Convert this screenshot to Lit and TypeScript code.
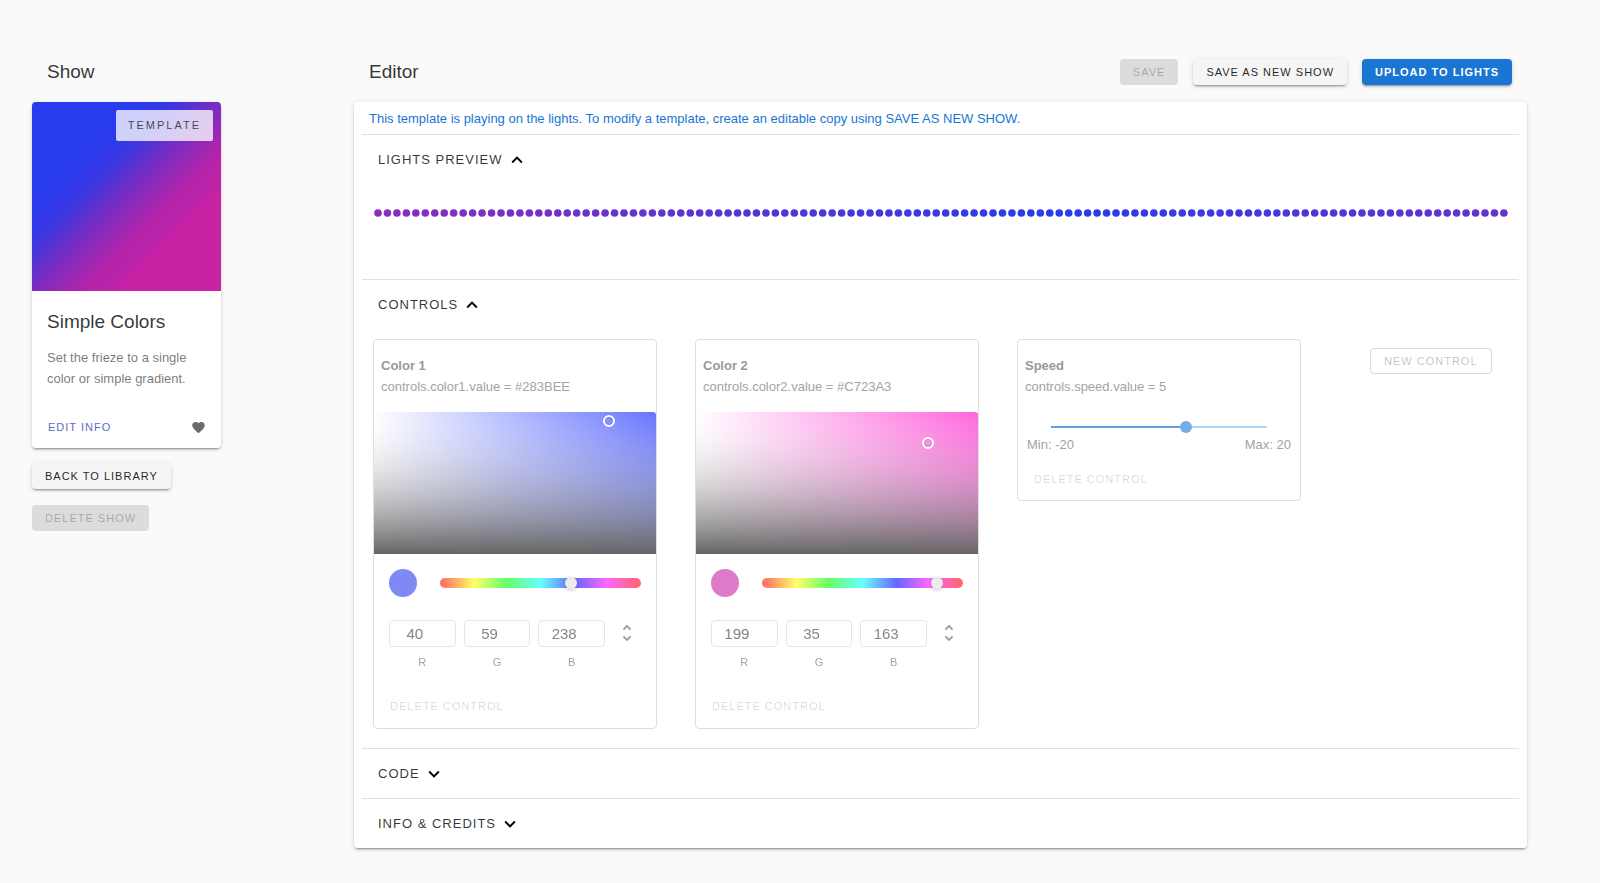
import { LitElement, html, css, svg } from "lit";
import { customElement, property, state } from "lit/decorators.js";
import { styleMap } from "lit/directives/style-map.js";

const CHEVRON_DOWN = "M7.41 8.58 12 13.17l4.59-4.59L18 10l-6 6-6-6z";
const CHEVRON_UP = "M7.41 15.41 12 10.83l4.59 4.58L18 14l-6-6-6 6z";
const HEART =
  "M12 21.35l-1.45-1.32C5.4 15.36 2 12.27 2 8.5 2 5.41 4.42 3 7.5 3c1.74 0 3.41.81 4.5 2.08C13.09 3.81 14.76 3 16.5 3 19.58 3 22 5.41 22 8.5c0 3.77-3.4 6.86-8.55 11.53z";
const UNFOLD =
  "M12 18.17 8.83 15l-1.41 1.41L12 21l4.59-4.59L15.17 15M12 5.83 15.17 9l1.41-1.41L12 3 7.41 7.59 8.83 9z";

const icon = (d: string) =>
  html`<svg class="icon" viewBox="0 0 24 24" aria-hidden="true">${svg`<path d=${d}></path>`}</svg>`;

const base = css`
  * { box-sizing: border-box; }
  h1, h2, h3, p { margin: 0; font-weight: 400; }
  .icon { display: block; fill: currentColor; }
  button {
    font-family: inherit;
    font-size: 11px;
    line-height: 16px;
    letter-spacing: 1px;
    text-transform: uppercase;
    white-space: nowrap;
    border: 0;
    border-radius: 4px;
    margin: 0;
    padding: 0 13px;
    height: 26px;
    color: rgba(0, 0, 0, 0.87);
    background: none;
  }
  .raised {
    background: #f5f5f5;
    box-shadow: 0 3px 1px -2px rgba(0, 0, 0, 0.2), 0 2px 2px 0 rgba(0, 0, 0, 0.14), 0 1px 5px 0 rgba(0, 0, 0, 0.12);
  }
  .filled:disabled { background: #dcdcdc; color: rgba(0, 0, 0, 0.26); }
  .primary { background: #1976d2; color: #fff; font-weight: 700; }
`;

const controlStyles = css`
  :host {
    display: block;
    width: 284px;
    border: 1px solid #dedede;
    border-radius: 4px;
    background: #fff;
  }
  .head { padding: 15px 7px 0; font-size: 13px; line-height: 21px; color: #a3a3a3; }
  .name { font-size: 13px; font-weight: 700; color: #999; }
  .delete { color: rgba(0, 0, 0, 0.16); padding: 0 8px; }
  input { font-family: inherit; margin: 0; }
`;

@customElement("color-control")
class ColorControl extends LitElement {
  static styles = [
    base,
    controlStyles,
    css`
      .picker { opacity: 0.6; margin-top: 15px; }
      .canvas { position: relative; height: 142px; border-top-right-radius: 3px; }
      .cursor {
        position: absolute;
        width: 12px;
        height: 12px;
        margin: -6px;
        border-radius: 50%;
        border: 2px solid #fff;
        box-shadow: inset 0 0 1px 1px rgba(0, 0, 0, 0.3), 0 0 1px rgba(0, 0, 0, 0.4);
      }
      .hue-row { display: flex; align-items: center; gap: 23px; padding: 15px 15px 0; }
      .swatch { width: 28px; height: 28px; border-radius: 50%; flex: none; }
      .spectrum {
        flex: 1;
        min-width: 0;
        height: 10px;
        border-radius: 5px;
        background: linear-gradient(90deg, red, #ff0 17%, #0f0 33%, #0ff 50%, #00f 67%, #f0f 83%, red);
      }
      .hue {
        -webkit-appearance: none;
        appearance: none;
        display: block;
        width: calc(100% + 12px);
        height: 10px;
        margin: 0 -6px;
        background: transparent;
      }
      .hue::-webkit-slider-thumb {
        -webkit-appearance: none;
        width: 12px;
        height: 12px;
        border-radius: 50%;
        background: #e0e0e0;
        box-shadow: 0 1px 4px rgba(0, 0, 0, 0.4);
      }
      .fields { display: flex; gap: 8px; padding: 23px 15px 0; }
      .field { flex: 1; min-width: 0; display: flex; flex-direction: column; gap: 7px; text-align: center; }
      .field input {
        width: 100%;
        height: 27px;
        border: 1px solid #d4d4d4;
        border-radius: 4px;
        padding: 0 4px;
        font-size: 15px;
        text-align: center;
        color: #333;
        background: #fff;
      }
      .field label { font-size: 11px; line-height: 16px; color: #666; }
      .mode { width: 28px; height: 26px; padding: 0 3px; display: grid; place-items: center; color: #555; }
      .mode .icon { width: 22px; height: 22px; }
      .foot { padding: 23px 8px 9px; }
    `,
  ];

  @property() name = "";
  @property() key = "";
  @property({ attribute: false }) rgb: number[] = [0, 0, 0];

  private get hex() {
    return "#" + this.rgb.map((c) => c.toString(16).padStart(2, "0")).join("").toUpperCase();
  }

  private get hsv() {
    const [r, g, b] = this.rgb.map((c) => c / 255);
    const max = Math.max(r, g, b);
    const d = max - Math.min(r, g, b);
    let h = 0;
    if (d) {
      if (max === r) h = ((g - b) / d + 6) % 6;
      else if (max === g) h = (b - r) / d + 2;
      else h = (r - g) / d + 4;
    }
    return { h: h * 60, s: max ? d / max : 0, v: max };
  }

  render() {
    const { h, s, v } = this.hsv;
    // The value layer fades from clear white to solid black.
    const shade = Array.from({ length: 21 }, (_, i) => {
      const t = i / 20;
      const g = Math.round(255 * (1 - t));
      return `rgba(${g}, ${g}, ${g}, ${t}) ${t * 100}%`;
    }).join(", ");
    const canvas = {
      background: `linear-gradient(to bottom, ${shade}), linear-gradient(to right, #fff, hsl(${h}, 100%, 50%))`,
    };
    return html`
      <div class="head">
        <h3 class="name">${this.name}</h3>
        <p>controls.${this.key}.value = ${this.hex}</p>
      </div>
      <div class="picker">
        <div class="canvas" style=${styleMap(canvas)}>
          <span class="cursor" style=${styleMap({ left: `${s * 100}%`, top: `${(1 - v) * 100}%` })}></span>
        </div>
        <div class="hue-row">
          <span class="swatch" style=${styleMap({ background: this.hex })}></span>
          <div class="spectrum">
            <input class="hue" type="range" min="0" max="360" aria-label="Hue" .value=${String(Math.round(h))} />
          </div>
        </div>
        <div class="fields">
          ${["R", "G", "B"].map(
            (c, i) => html`<div class="field">
              <input id=${c} type="number" min="0" max="255" .value=${String(this.rgb[i])} />
              <label for=${c}>${c}</label>
            </div>`
          )}
          <button class="mode" aria-label="Change colour format">${icon(UNFOLD)}</button>
        </div>
      </div>
      <div class="foot"><button class="delete" disabled>Delete control</button></div>
    `;
  }
}

@customElement("number-control")
class NumberControl extends LitElement {
  static styles = [
    base,
    controlStyles,
    css`
      .range-row { padding: 20px 27px 0; }
      .range {
        -webkit-appearance: none;
        appearance: none;
        display: block;
        width: 100%;
        height: 20px;
        background-color: transparent;
        background-repeat: no-repeat;
        background-position: center;
        background-size: calc(100% - 12px) 2px;
      }
      .range::-webkit-slider-thumb {
        -webkit-appearance: none;
        width: 12px;
        height: 12px;
        border-radius: 50%;
        background: #75ade4;
      }
      .limits {
        display: flex;
        justify-content: space-between;
        padding: 0 9px;
        font-size: 13px;
        line-height: 16px;
        color: #a3a3a3;
      }
      .foot { padding: 13px 8px 8px; }
    `,
  ];

  @property() name = "";
  @property() key = "";
  @property({ type: Number }) min = 0;
  @property({ type: Number }) max = 100;
  @property({ type: Number }) value = 0;

  render() {
    const pct = ((this.value - this.min) / (this.max - this.min)) * 100;
    const fill = { backgroundImage: `linear-gradient(90deg, #5ea2e4 ${pct}%, #acd7fd ${pct}%)` };
    return html`
      <div class="head">
        <h3 class="name">${this.name}</h3>
        <p>controls.${this.key}.value = ${this.value}</p>
      </div>
      <div class="range-row">
        <input
          class="range"
          type="range"
          aria-label=${this.name}
          min=${this.min}
          max=${this.max}
          .value=${String(this.value)}
          style=${styleMap(fill)}
        />
      </div>
      <div class="limits"><span>Min: ${this.min}</span><span>Max: ${this.max}</span></div>
      <div class="foot"><button class="delete" disabled>Delete control</button></div>
    `;
  }
}

@customElement("lights-preview")
class LightsPreview extends LitElement {
  static styles = css`
    :host { display: block; padding: 25px 11px 62px 12px; }
    .strip { display: block; width: 100%; height: 8px; overflow: visible; }
  `;

  render() {
    const count = 120;
    const from = [0x28, 0x3b, 0xee];
    const to = [0xc7, 0x23, 0xa3];
    const lights = Array.from({ length: count }, (_, i) => {
      const t = 0.6 * (Math.abs(i - 72) / 72);
      const c = from.map((v, k) => Math.round(v + (to[k] - v) * t));
      return svg`<circle cx=${4 + i * 9.47} cy="4" r="3.8" fill=${`rgb(${c.join(",")})`}></circle>`;
    });
    return html`<svg class="strip" viewBox="0 0 1135 8" role="img" aria-label="Lights">${lights}</svg>`;
  }
}

@customElement("app-root")
class AppRoot extends LitElement {
  static styles = [
    base,
    css`
      :host {
        display: block;
        min-height: 100vh;
        background: #fafafa;
        color: rgba(0, 0, 0, 0.8);
        font-family: "Liberation Sans", Arial, sans-serif;
        font-size: 13px;
      }
      .page {
        display: grid;
        grid-template-columns: 189px minmax(0, 1fr);
        column-gap: 133px;
        align-items: start;
        padding: 59px 73px 34px 32px;
      }
      .bar { display: flex; align-items: center; gap: 15px; height: 26px; margin-bottom: 17px; padding: 0 15px; }
      .title { font-size: 19px; line-height: 26px; margin-right: auto; }
      .card {
        background: #fff;
        border-radius: 4px;
        box-shadow: 0 3px 1px -2px rgba(0, 0, 0, 0.2), 0 2px 2px 0 rgba(0, 0, 0, 0.14), 0 1px 5px 0 rgba(0, 0, 0, 0.12);
      }
      .cover {
        display: flex;
        justify-content: flex-end;
        align-items: flex-start;
        padding: 8px;
        aspect-ratio: 1;
        border-radius: 4px 4px 0 0;
        background: linear-gradient(135deg, #283bee 28%, #3937e3 37%, #7a2dc0 50%, #b024ac 62%, #c723a3 75%);
      }
      .tag {
        padding: 0 12px;
        border-radius: 2px;
        font-size: 11px;
        line-height: 31px;
        letter-spacing: 2px;
        background: rgba(255, 255, 255, 0.77);
        color: rgba(0, 0, 0, 0.7);
      }
      .info { padding: 18px 15px 0; }
      .info p { margin-top: 12px; line-height: 21px; color: rgba(0, 0, 0, 0.55); }
      .actions { display: flex; align-items: center; justify-content: space-between; padding: 25px 15px 8px 8px; }
      .edit { color: #5c6bc0; padding: 0 8px; }
      .like { padding: 0; height: 15px; color: #6b6b6b; }
      .like .icon { width: 15px; height: 15px; }
      .side-buttons { display: flex; flex-direction: column; align-items: flex-start; gap: 16px; margin-top: 15px; }
      .editor { padding: 0 8px; }
      .notice { padding: 1px 7px 0; line-height: 31px; color: #1976d2; }
      .section { border-top: 1px solid #e0e0e0; }
      .toggle {
        display: flex;
        align-items: center;
        gap: 3px;
        height: 49px;
        padding: 0 16px;
        font-size: 13px;
        color: rgba(0, 0, 0, 0.8);
      }
      .toggle .icon { width: 22px; height: 22px; color: #000; }
      .controls { display: flex; flex-wrap: wrap; align-items: flex-start; gap: 38px; padding: 10px 11px 19px; }
      .new { margin: 9px 0 0 31px; border: 1px solid #d9d9d9; color: rgba(0, 0, 0, 0.26); padding: 0 13px; }
    `,
  ];

  @state() private open = new Set(["preview", "controls"]);

  private toggle(id: string) {
    const next = new Set(this.open);
    next.has(id) ? next.delete(id) : next.add(id);
    this.open = next;
  }

  private section(id: string, label: string, body: unknown = null) {
    const open = this.open.has(id);
    return html`<section class="section">
      <button class="toggle" aria-expanded=${open ? "true" : "false"} @click=${() => this.toggle(id)}>
        ${label} ${icon(open ? CHEVRON_UP : CHEVRON_DOWN)}
      </button>
      ${open ? body : null}
    </section>`;
  }

  render() {
    return html`
      <main class="page">
        <aside>
          <div class="bar"><h1 class="title">Show</h1></div>
          <article class="card">
            <div class="cover"><span class="tag">TEMPLATE</span></div>
            <div class="info">
              <h2 class="title">Simple Colors</h2>
              <p>Set the frieze to a single color or simple gradient.</p>
            </div>
            <div class="actions">
              <button class="edit">Edit info</button>
              <button class="like" aria-label="Like">${icon(HEART)}</button>
            </div>
          </article>
          <div class="side-buttons">
            <button class="raised">Back to library</button>
            <button class="filled" disabled>Delete show</button>
          </div>
        </aside>
        <div>
          <div class="bar">
            <h1 class="title">Editor</h1>
            <button class="filled" disabled>Save</button>
            <button class="raised">Save as new show</button>
            <button class="raised primary">Upload to lights</button>
          </div>
          <div class="card editor">
            <p class="notice">
              This template is playing on the lights. To modify a template, create an editable copy using SAVE AS NEW SHOW.
            </p>
            ${this.section("preview", "Lights preview", html`<lights-preview></lights-preview>`)}
            ${this.section(
              "controls",
              "Controls",
              html`<div class="controls">
                <color-control name="Color 1" key="color1" .rgb=${[40, 59, 238]}></color-control>
                <color-control name="Color 2" key="color2" .rgb=${[199, 35, 163]}></color-control>
                <number-control name="Speed" key="speed" min="-20" max="20" value="5"></number-control>
                <button class="new" disabled>New control</button>
              </div>`
            )}
            ${this.section("code", "Code")} ${this.section("info", "Info & credits")}
          </div>
        </div>
      </main>
    `;
  }
}
